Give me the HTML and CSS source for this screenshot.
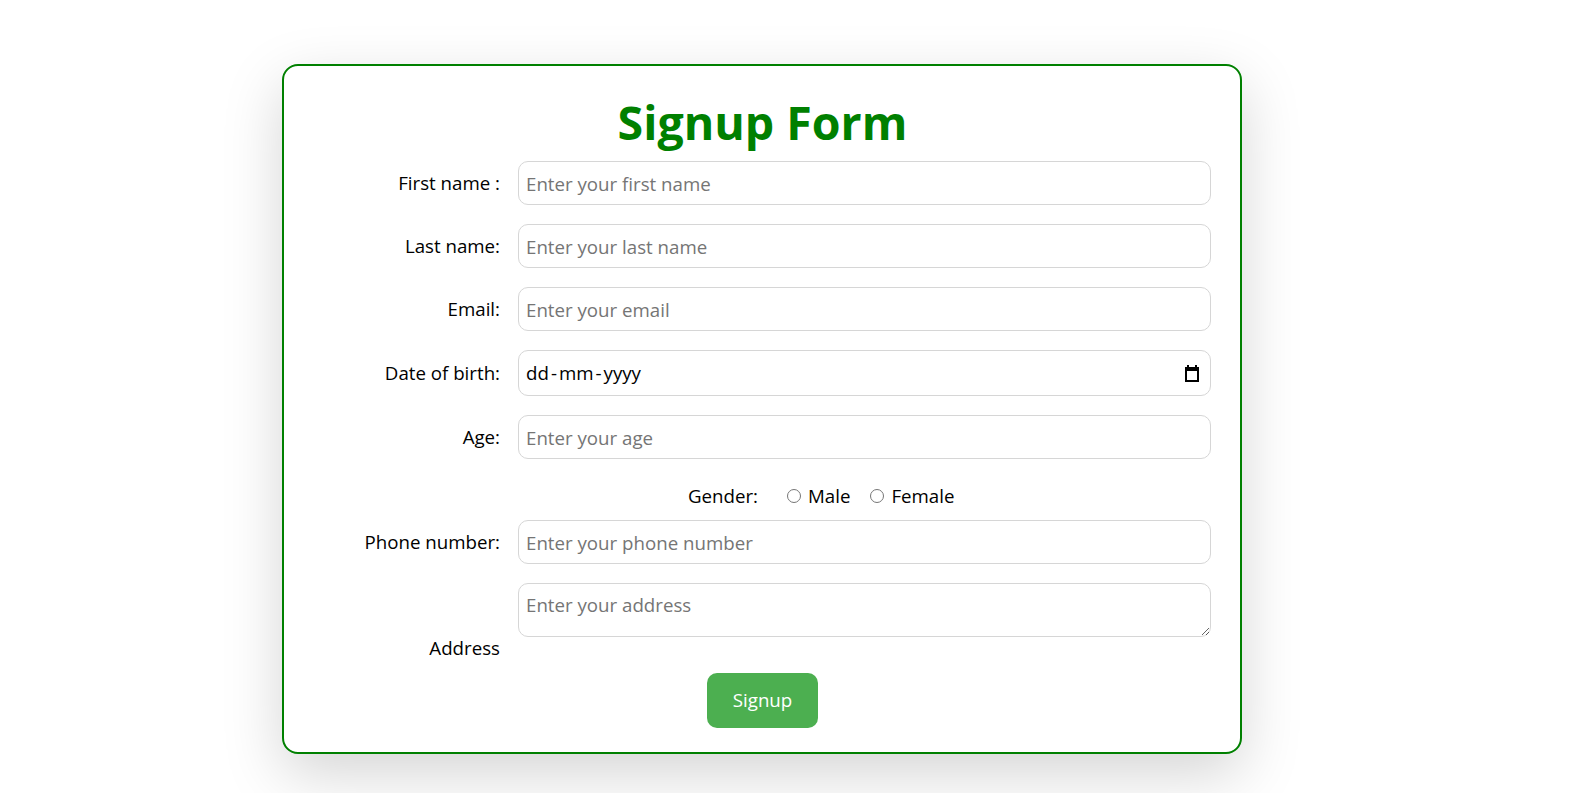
FILE: index.html
```html
<!DOCTYPE html>
<html lang="en">
<head>
<meta charset="utf-8">
<title>Signup Form</title>
<link rel="stylesheet" href="styles.css">
</head>
<body>
<div class="page">
  <form class="card">
    <h1 class="title">Signup Form</h1>
    <div class="row">
      <label class="label" for="fn">First name :</label>
      <input class="field" id="fn" type="text" placeholder="Enter your first name">
    </div>
    <div class="row">
      <label class="label" for="ln">Last name:</label>
      <input class="field" id="ln" type="text" placeholder="Enter your last name">
    </div>
    <div class="row">
      <label class="label" for="em">Email:</label>
      <input class="field" id="em" type="text" placeholder="Enter your email">
    </div>
    <div class="row">
      <label class="label">Date of birth:</label>
      <div class="field date-field">
        <span class="date-text"><span>dd</span><span class="sep">-</span><span>mm</span><span class="sep">-</span><span>yyyy</span></span>
        <svg class="cal-icon" width="16" height="17" viewBox="0 0 16 17" aria-hidden="true">
          <rect x="3" y="0" width="2" height="3" fill="#000"/>
          <rect x="11" y="0" width="2" height="3" fill="#000"/>
          <rect x="1" y="2" width="14" height="4" fill="#000"/>
          <rect x="2" y="3" width="12" height="13" fill="none" stroke="#000" stroke-width="2"/>
        </svg>
      </div>
    </div>
    <div class="row">
      <label class="label" for="ag">Age:</label>
      <input class="field" id="ag" type="text" placeholder="Enter your age">
    </div>
    <div class="gender-row">
      <span class="gender-label">Gender:</span>
      <label class="radio-opt"><input type="radio" name="g"> Male</label>
      <label class="radio-opt"><input type="radio" name="g"> Female</label>
    </div>
    <div class="row">
      <label class="label" for="ph">Phone number:</label>
      <input class="field" id="ph" type="text" placeholder="Enter your phone number">
    </div>
    <div class="row row-address">
      <label class="label" for="ad">Address</label>
      <textarea class="field area" id="ad" placeholder="Enter your address"></textarea>
    </div>
    <div class="actions">
      <button class="btn" type="button">Signup</button>
    </div>
  </form>
</div>
</body>
</html>
```
FILE: styles.css
```css
* { box-sizing: border-box; }

html, body {
  margin: 0;
  background: #ffffff;
}

body {
  font-family: "Open Sans", "Noto Sans", sans-serif;
  font-size: 18.7px;
  line-height: 24px;
  color: #000;
}

.page {
  padding: 64px 0 40px 282px;
}

.card {
  width: 960px;
  border: 2px solid #008000;
  border-radius: 16px;
  background: #fff;
  padding: 27px 29px 24px 30px;
  box-shadow: 0 20px 60px rgba(0, 0, 0, 0.17);
}

.title {
  margin: 0 0 10px;
  text-align: center;
  color: #008000;
  font-size: 46.5px;
  line-height: 58px;
  font-weight: 700;
}

.row {
  display: flex;
  align-items: center;
  gap: 18px;
  margin-bottom: 19px;
}

.label {
  width: 186px;
  flex: none;
  text-align: right;
}

.field {
  flex: 1;
  height: 44px;
  border: 1px solid #d6d6d6;
  border-radius: 10px;
  padding: 9px 7px;
  font-family: inherit;
  font-size: 18.7px;
  line-height: 24px;
  color: #000;
  background: #fff;
  outline: none;
}

.field::placeholder {
  color: #757575;
}

.date-field {
  height: 46px;
  display: flex;
  align-items: center;
  justify-content: space-between;
  padding: 0 10px 0 7px;
}

.date-text {
  display: flex;
}

.sep {
  margin: 0 2px;
}

.cal-icon {
  display: block;
}

.gender-row {
  display: flex;
  align-items: center;
  padding: 6px 0 0 374px;
  margin-bottom: 12px;
}

.gender-label {
  width: 94px;
}

.radio-opt {
  display: flex;
  align-items: center;
  gap: 4px;
  margin-right: 15px;
}

.radio-opt input {
  margin: 0 3px 0 5px;
  width: 14px;
  height: 14px;
}

.row-address {
  align-items: flex-end;
}

.area {
  height: 54px;
  resize: vertical;
  margin-bottom: 23px;
}

.actions {
  display: flex;
  justify-content: center;
  margin-top: -6px;
}

.btn {
  background: #4caf50;
  color: #fff;
  border: none;
  border-radius: 10px;
  padding: 15px 26px 16px;
  font-family: inherit;
  font-size: 18.7px;
  line-height: 24px;
}
```
